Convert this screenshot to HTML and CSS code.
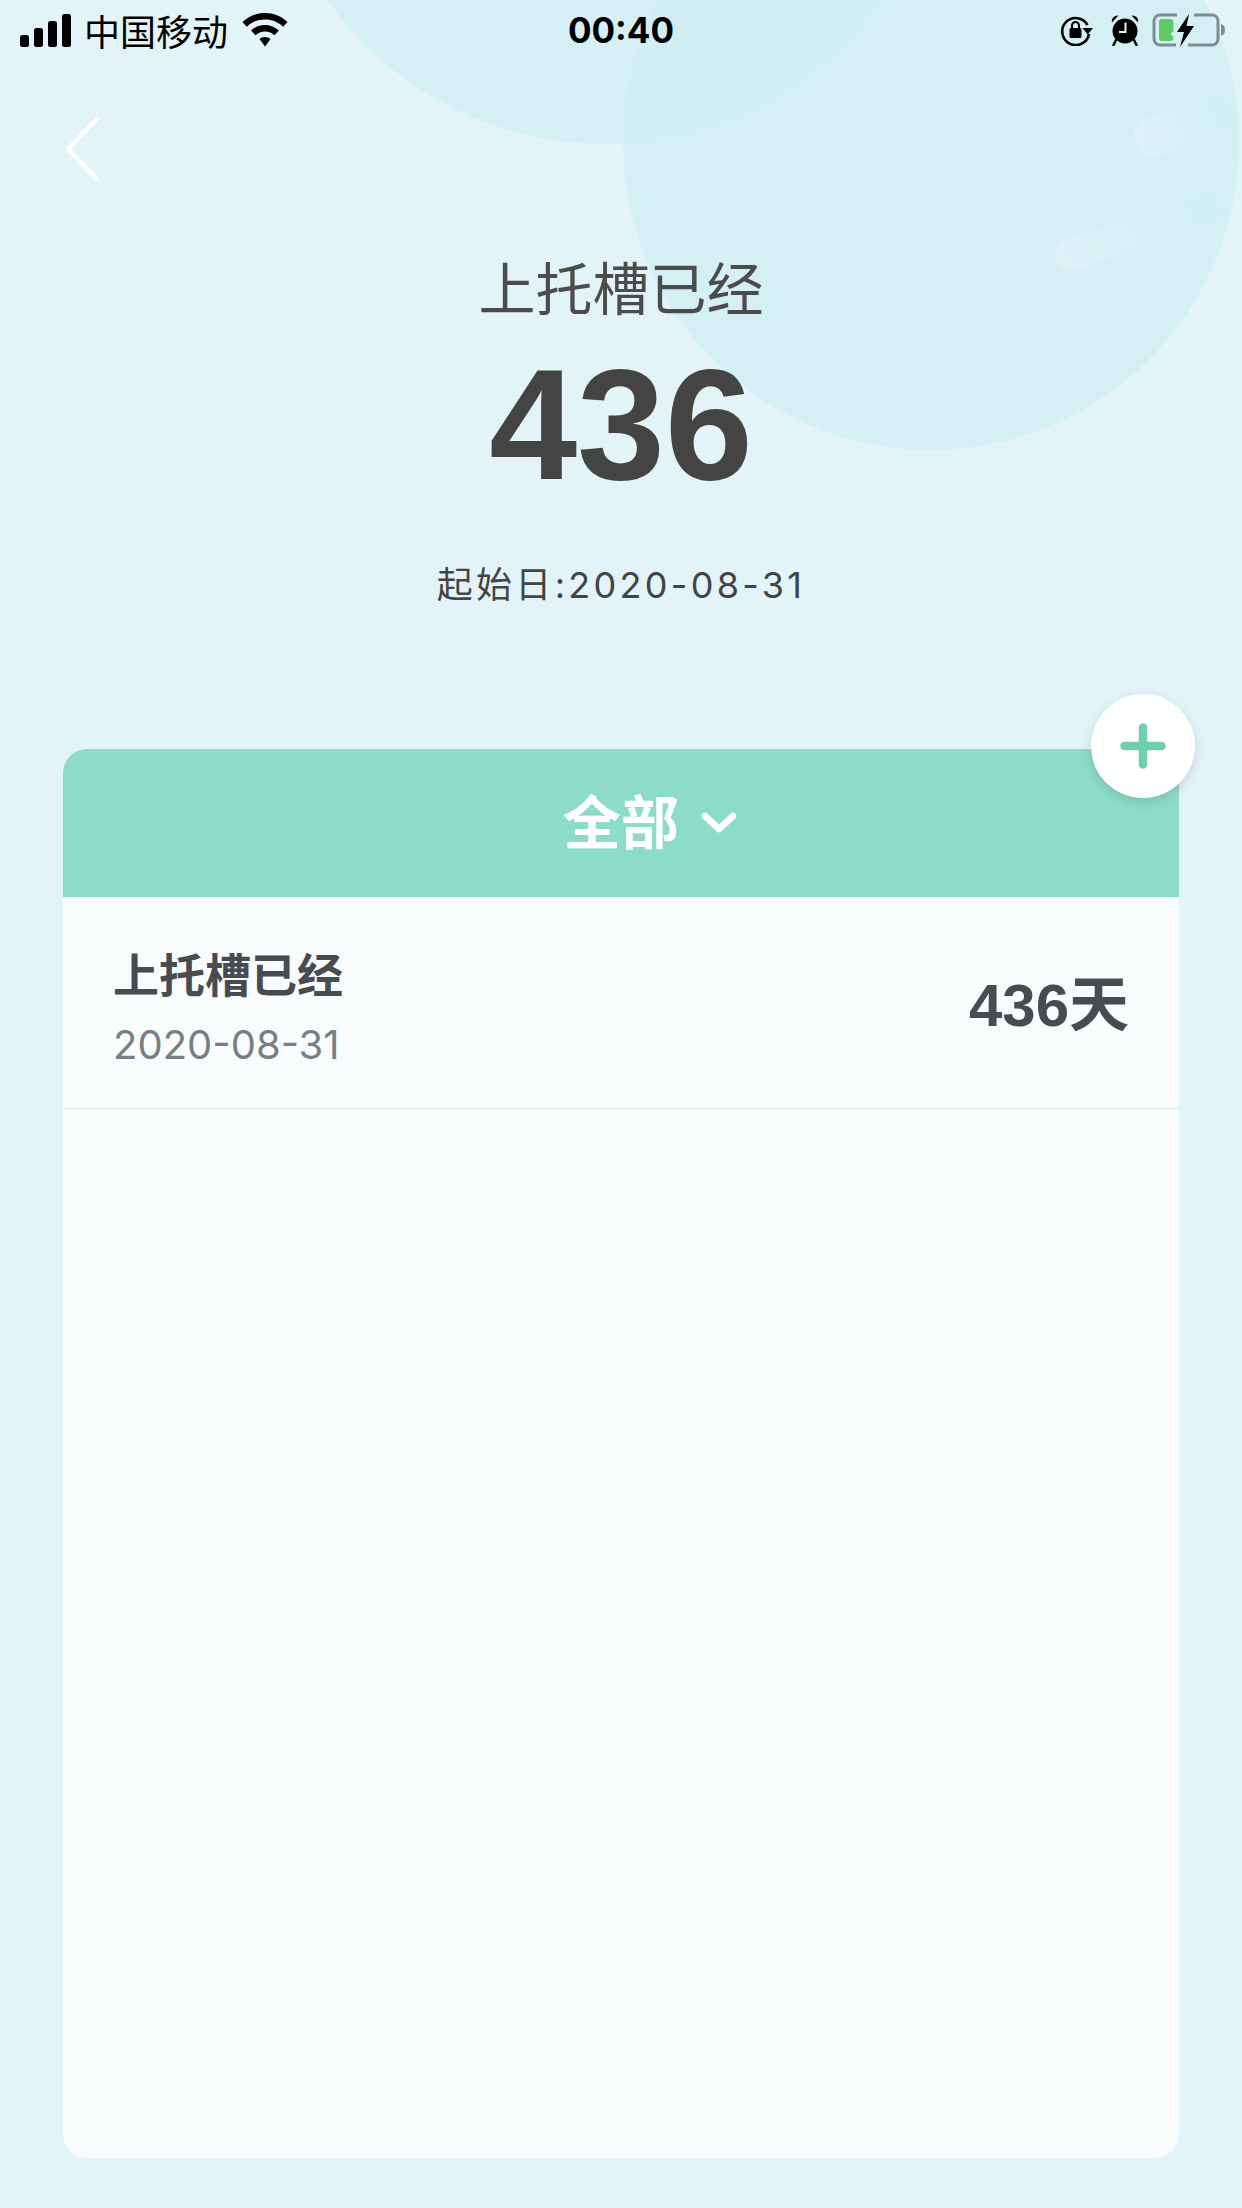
FILE: index.html
```html
<!DOCTYPE html>
<html lang="zh-CN">

<head>
    <meta charset="UTF-8">
    <meta name="viewport" content="width=device-width, initial-scale=1.0">
    <title>上托槽已经</title>
    <link rel="stylesheet" href="styles.css">
</head>

<body>
    <div class="page">
        <!-- 背景装饰 -->
        <div class="bubble bubble-top"></div>
        <div class="bubble bubble-right"></div>
        <div class="streak streak-one"></div>
        <div class="streak streak-two"></div>

        <div class="status-bar">
            <div class="status-left">
                <svg class="icon-signal" width="52" height="33" viewBox="0 0 52 33">
                    <rect x="0" y="21" width="9" height="12" rx="2.5" />
                    <rect x="14" y="14" width="9" height="19" rx="2.5" />
                    <rect x="28" y="7" width="9" height="26" rx="2.5" />
                    <rect x="42" y="0" width="9" height="33" rx="2.5" />
                </svg>
                <span class="carrier">中国移动</span>
                <svg class="icon-wifi" width="46" height="34" viewBox="0 0 46 34">
                    <path d="M23 0C14.500 0 6.700 3.200 0.500 8.900L4.800 13.700C9.700 9.100 16 6.500 23 6.500S36.300 9.100 41.200 13.700L45.500 8.900C39.300 3.200 31.500 0 23 0Z" />
                    <path d="M23 12C17.700 12 12.900 14 9.100 17.500L13.500 22.300C16 20 19.300 18.500 23 18.500S30 20 32.500 22.300L36.900 17.500C33.100 14 28.300 12 23 12Z" />
                    <path d="M23 24C20.800 24 18.900 24.800 17.500 26.100L23 33.500L28.500 26.100C27.100 24.800 25.200 24 23 24Z" />
                </svg>
            </div>
            <div class="status-time">00:40</div>
            <div class="status-right">
                <svg class="icon-lock" width="33" height="32" viewBox="0 0 33 32">
                    <path d="M27.500 11A13.500 13.500 0 1 0 29 20" fill="none" stroke="#000" stroke-width="2.600" />
                    <path d="M22.500 14H33L27.800 20.500Z" />
                    <rect x="9.500" y="14" width="12" height="10" rx="1.500" />
                    <path d="M12 14.500V11.500A3.500 3.500 0 0 1 19 11.500V14.500" fill="none" stroke="#000" stroke-width="2" />
                </svg>
                <svg class="icon-alarm" width="28" height="32" viewBox="0 0 28 32">
                    <circle cx="14" cy="17" r="12.500" />
                    <path d="M1 8.500C0 5 3 1 7.500 1.500Z" />
                    <path d="M27 8.500C28 5 25 1 20.500 1.500Z" />
                    <path d="M5 26L2.500 31M23 26L25.500 31" stroke="#000" stroke-width="2.500" stroke-linecap="round" />
                    <path d="M14.500 8.500V18H8" fill="none" stroke="#e2f4f8" stroke-width="2" />
                </svg>
                <svg class="icon-battery" width="74" height="34" viewBox="0 0 74 34">
                    <path d="M25 2H8A6 6 0 0 0 2 8V26A6 6 0 0 0 8 32H24M42 2H60A6 6 0 0 1 66 8V26A6 6 0 0 1 60 32H36" fill="none" stroke="#7d8e93" stroke-width="3" />
                    <path d="M69 11C72 12 73 14 73 17S72 22 69 23Z" fill="#7d8e93" />
                    <path d="M10 6H18A3.500 3.500 0 0 1 21.500 9.500V18L18.500 21L21.500 24V25A3 3 0 0 1 18.500 28H10A3 3 0 0 1 7 25V9A3 3 0 0 1 10 6Z" fill="#62c967" />
                    <path d="M37 1L25 19H32L28 34L42 13H34.500Z" />
                </svg>
            </div>
        </div>

        <div class="nav-bar">
            <svg class="icon-back" width="36" height="66" viewBox="0 0 36 66">
                <path d="M32 2L3 32L32 62" fill="none" stroke="#fff" stroke-width="4.500" stroke-linecap="round" stroke-linejoin="round" />
            </svg>
        </div>

        <div class="hero">
            <div class="hero-title">上托槽已经</div>
            <div class="hero-count">436</div>
            <div class="hero-date">起始日:2020-08-31</div>
        </div>

        <div class="card">
            <button class="add-button">
                <svg width="46" height="46" viewBox="0 0 46 46">
                    <path d="M23 4.500V41.500M4.500 23H41.500" fill="none" stroke="#6fcfae" stroke-width="8.500" stroke-linecap="round" />
                </svg>
            </button>
            <div class="card-header">
                <span class="card-filter">全部</span>
                <svg class="icon-chevron" width="36" height="24" viewBox="0 0 36 24">
                    <path d="M4 5L18 18L32 5" fill="none" stroke="#fff" stroke-width="6.500" stroke-linecap="round" stroke-linejoin="round" />
                </svg>
            </div>
            <div class="event-row">
                <div class="event-info">
                    <div class="event-name">上托槽已经</div>
                    <div class="event-date">2020-08-31</div>
                </div>
                <div class="event-days">436天</div>
            </div>
        </div>
    </div>
</body>

</html>
```

FILE: styles.css
```css
* {
    box-sizing: border-box;
}

body {
    margin: 0;
    font-family: 'Liberation Sans', 'Noto Sans CJK SC', sans-serif;
    color: #444;
}

.page {
    position: relative;
    width: 1242px;
    height: 2208px;
    padding-bottom: 50px;
    overflow: hidden;
    display: flex;
    flex-direction: column;
    background-color: #e2f4f8;
}

.bubble {
    position: absolute;
    border-radius: 50%;
    background-color: #d5f0f5;
}

.bubble-top {
    left: 265px;
    top: -536px;
    width: 680px;
    height: 680px;
}

.bubble-right {
    left: 623px;
    top: -166px;
    width: 616px;
    height: 616px;
    background-color: rgba(205, 237, 244, 0.6);
}

.streak {
    position: absolute;
    border-radius: 18px;
    transform: rotate(-19deg);
    transform-origin: left center;
    background: linear-gradient(to right, #def2f8, rgba(222, 242, 248, 0) 55%, rgba(200, 236, 242, 0.35) 85%, rgba(200, 236, 242, 0));
}

.streak-one {
    left: 1136px;
    top: 123px;
    width: 110px;
    height: 40px;
}

.streak-two {
    left: 1056px;
    top: 244px;
    width: 190px;
    height: 32px;
}

.status-bar {
    position: relative;
    height: 60px;
    padding: 13px 16px 0;
    display: grid;
    grid-template-columns: 1fr auto 1fr;
    align-items: start;
    color: #000;
}

.status-left {
    display: flex;
    align-items: center;
    height: 34px;
    padding-left: 4px;
}

.status-left svg,
.status-right svg {
    fill: #000;
    flex: none;
}

.carrier {
    margin-left: 12px;
    font-size: 36px;
    line-height: 34px;
    font-family: 'Noto Sans CJK SC', sans-serif;
}

.icon-wifi {
    margin-left: 14px;
}

.status-time {
    font-size: 35px;
    line-height: 34px;
    font-weight: 700;
    font-family: 'Inter', sans-serif;
}

.status-right {
    display: flex;
    justify-content: flex-end;
    align-items: center;
    height: 34px;
}

.icon-alarm {
    margin-left: 18px;
}

.icon-battery {
    margin-left: 13px;
}

.nav-bar {
    position: relative;
    height: 190px;
    padding: 57px 0 0 65px;
}

.icon-back {
    display: block;
}

.hero {
    position: relative;
    height: 499px;
    text-align: center;
}

.hero-title {
    margin-top: -4px;
    font-size: 57px;
    line-height: 78px;
    font-family: 'Noto Sans CJK SC', sans-serif;
    font-weight: 400;
    color: #4c4c4c;
}

.hero-count {
    margin-top: 15px;
    font-size: 158px;
    line-height: 170px;
    font-weight: 700;
}

.hero-date {
    margin-top: 51px;
    font-size: 36px;
    line-height: 50px;
    letter-spacing: 3.300px;
    font-family: 'Inter', 'Noto Sans CJK SC', sans-serif;
}

.card {
    position: relative;
    flex: 1;
    margin: 0 63px;
    border-radius: 24px;
    background-color: #f8fcfd;
}

.card-header {
    height: 148px;
    padding-left: 58px;
    display: flex;
    justify-content: center;
    align-items: center;
    gap: 22px;
    border-radius: 24px 24px 0 0;
    background-color: #8cdcc8;
    color: #fff;
}

.card-filter {
    margin-top: -8px;
    font-size: 58px;
    font-weight: 700;
    font-family: 'Noto Sans CJK SC', sans-serif;
}

.add-button {
    position: absolute;
    right: -16px;
    top: -55px;
    width: 104px;
    height: 104px;
    padding: 0;
    border: none;
    border-radius: 50%;
    display: flex;
    justify-content: center;
    align-items: center;
    background-color: #fff;
    box-shadow: 0 4px 12px rgba(0, 0, 0, 0.12);
}

.event-row {
    height: 212px;
    padding: 0 50px;
    display: flex;
    justify-content: space-between;
    align-items: center;
    border-bottom: 1px solid #dfe7ea;
}

.event-info {
    margin-top: 4px;
}

.event-name {
    font-size: 46px;
    line-height: 62px;
    font-weight: 700;
    font-family: 'Noto Sans CJK SC', sans-serif;
    color: #484c50;
}

.event-date {
    margin-top: 18px;
    font-size: 40px;
    line-height: 48px;
    color: #787f84;
    font-family: 'Inter', sans-serif;
}

.event-days {
    margin-top: -6px;
    font-size: 60px;
    font-weight: 700;
    color: #484c50;
}
```
